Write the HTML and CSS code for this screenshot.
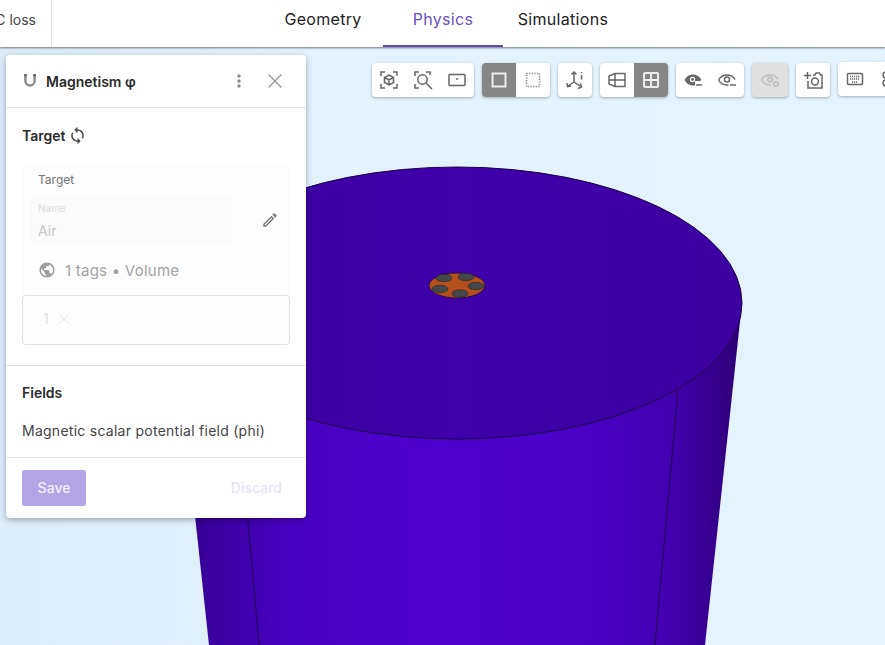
FILE: index.html
```html
<!DOCTYPE html>
<html lang="en">
<head>
<meta charset="utf-8">
<title>Magnetism</title>
<link rel="stylesheet" href="styles.css">
</head>
<body>
<header class="topbar">
  <div class="project"><span class="project-name">AC loss</span></div>
  <nav class="tabs">
    <a class="tab">Geometry</a>
    <a class="tab active">Physics</a>
    <a class="tab">Simulations</a>
  </nav>
</header>
<main class="stage">
  <svg class="model" viewBox="0 0 885 598" width="885" height="598" aria-hidden="true">
    <defs>
      <linearGradient id="side" x1="0" x2="1" y1="0" y2="0">
        <stop offset="0" stop-color="#2c0078"/>
        <stop offset=".06" stop-color="#3a009c"/>
        <stop offset=".2" stop-color="#4800bf"/>
        <stop offset=".45" stop-color="#5000cf"/>
        <stop offset=".7" stop-color="#4c00c6"/>
        <stop offset=".87" stop-color="#4400b0"/>
        <stop offset=".95" stop-color="#37008f"/>
        <stop offset="1" stop-color="#2c0074"/>
      </linearGradient>
      <linearGradient id="top" x1="0" x2="1" y1="0" y2="0">
        <stop offset="0" stop-color="#3c009e"/>
        <stop offset=".5" stop-color="#4000aa"/>
        <stop offset="1" stop-color="#3d00a0"/>
      </linearGradient>
    </defs>
    <path d="M172 256 L209 598 H705 L742 256Z" fill="url(#side)"/>
    <path d="M237 350 L259 598M678 343 L655 598" stroke="#1f0050" stroke-width="1" fill="none"/>
    <ellipse cx="457" cy="256" rx="285" ry="136" fill="url(#top)" stroke="#1a0248" stroke-width="1"/>
    <ellipse cx="457" cy="238.500" rx="28" ry="12.500" fill="#b4501e" stroke="#2a1040" stroke-width="1"/>
    <ellipse cx="444" cy="231" rx="8" ry="3.700" fill="#45474a" stroke="#222" stroke-width=".6"/>
    <ellipse cx="466" cy="230" rx="8" ry="3.700" fill="#45474a" stroke="#222" stroke-width=".6"/>
    <ellipse cx="476" cy="239" rx="8" ry="3.700" fill="#45474a" stroke="#222" stroke-width=".6"/>
    <ellipse cx="460" cy="246.500" rx="8" ry="3.700" fill="#45474a" stroke="#222" stroke-width=".6"/>
    <ellipse cx="440" cy="242" rx="8" ry="3.700" fill="#45474a" stroke="#222" stroke-width=".6"/>
  </svg>

  <div class="toolbar">
    <div class="group">
      <button class="tool"><svg viewBox="0 0 24 24" class="ico"><path d="M4 8V4h4M16 4h4v4M20 16v4h-4M8 20H4v-4"/><path d="M12 7l4.500 2.500v5L12 17l-4.500-2.500v-5zM7.500 9.500L12 12l4.500-2.500M12 12v5"/></svg></button>
      <button class="tool"><svg viewBox="0 0 24 24" class="ico"><path d="M4 8V4h4M15 4h4v3M4 16v4h4"/><circle cx="11.500" cy="11.500" r="4.700"/><path d="M15 15l6 6"/></svg></button>
      <button class="tool"><svg viewBox="0 0 24 24" class="ico"><rect x="4" y="6.500" width="16" height="11" rx="1"/><circle cx="12" cy="11" r="1" class="dot"/></svg></button>
    </div>
    <div class="group">
      <button class="tool on"><svg viewBox="0 0 24 24" class="ico"><rect x="5.500" y="5.500" width="13" height="13"/></svg></button>
      <button class="tool"><svg viewBox="0 0 24 24" class="ico thin"><rect x="5.500" y="5.500" width="13" height="13" stroke-dasharray="1.300 1.300"/></svg></button>
    </div>
    <div class="group">
      <button class="tool"><svg viewBox="0 0 24 24" class="ico"><path d="M11 5v9M11 14l-6 4M11 14l6 4M8.500 6.500L11 4l2.500 2.500M4 15l.6 3.600 3.400-.6M15 20.500l3.500-1.500-1-3.500"/><path d="M18.500 4v1.200M18.500 7v4.500"/></svg></button>
    </div>
    <div class="group">
      <button class="tool"><svg viewBox="0 0 24 24" class="ico"><path d="M4 8l6-2.500h10v13H10L4 16zM10 5.500v13M4 12h16"/></svg></button>
      <button class="tool on"><svg viewBox="0 0 24 24" class="ico"><rect x="5" y="5" width="14" height="14" rx="1"/><path d="M12 5v14M5 12h14"/></svg></button>
    </div>
    <div class="group">
      <button class="tool"><svg viewBox="0 0 24 24" class="ico"><path class="fill" d="M3.500 12C5.500 8.300 8.500 6.500 12 6.500c3.300 0 6.300 1.700 8.300 5l-1 1.500H14v4.400c-3.900.4-8.300-1.200-10.500-5.400z"/><circle class="hole" cx="11.500" cy="11.500" r="2.700"/><circle class="fill" cx="11.500" cy="11.500" r="1.400"/><path d="M15 17h6"/></svg></button>
      <button class="tool"><svg viewBox="0 0 24 24" class="ico"><path d="M3.500 12C5.500 8.500 8.500 7 12 7s6.500 1.600 8 4.500M13.500 16.900c-4 .5-8-1.400-10-4.900"/><circle cx="12" cy="11.500" r="2.500"/><path d="M15 17h6"/></svg></button>
    </div>
    <div class="group disabled">
      <button class="tool"><svg viewBox="0 0 24 24" class="ico"><path d="M3.500 12C5.500 8.500 8.500 7 12 7s6.500 1.600 8 4.500M13 16.900c-4 .5-7.500-1.400-9.500-4.900"/><circle cx="12" cy="11.500" r="2.300"/><circle cx="18" cy="16" r="2.300"/></svg></button>
    </div>
    <div class="group">
      <button class="tool"><svg viewBox="0 0 24 24" class="ico"><path d="M6.500 4v7M3 7.500h7M12 7h2l1-2h3.500l1 2h1.500v13H7v-7"/><circle cx="14" cy="13.500" r="3.400"/></svg></button>
    </div>
    <div class="group raised">
      <button class="tool"><svg viewBox="0 0 24 24" class="ico"><rect x="4.500" y="6.500" width="15" height="11" rx="1"/><path class="keys" d="M7 9.500h10M7 12h10M9 15h6"/></svg></button>
      <button class="tool"><svg viewBox="0 0 24 24" class="ico"><circle cx="9" cy="8" r="3"/><circle cx="9" cy="16" r="3"/></svg></button>
    </div>
  </div>

  <aside class="panel">
    <div class="panel-head">
      <svg viewBox="0 0 24 24" class="head-ico"><path d="M6.500 4v8a5.500 5.500 0 0 0 11 0V4"/><path class="cap" d="M6.500 3.500v3M17.500 3.500v3"/></svg>
      <h2 class="panel-title">Magnetism φ</h2>
      <svg viewBox="0 0 24 24" class="more"><path d="M12 8c1.100 0 2-.9 2-2s-.9-2-2-2-2 .9-2 2 .9 2 2 2zm0 2c-1.100 0-2 .9-2 2s.9 2 2 2 2-.9 2-2-.9-2-2-2zm0 6c-1.100 0-2 .9-2 2s.9 2 2 2 2-.9 2-2-.9-2-2-2z"/></svg>
      <svg viewBox="0 0 24 24" class="close"><path d="M5 5l14 14M19 5L5 19"/></svg>
    </div>
    <section class="target">
      <div class="section-title">
        <h3>Target</h3>
        <svg viewBox="0 0 24 24" class="sync"><path d="M12 4V1L8 5l4 4V6c3.310 0 6 2.690 6 6 0 1.010-.25 1.970-.7 2.800l1.460 1.460C19.540 15.030 20 13.570 20 12c0-4.420-3.580-8-8-8zm0 14c-3.310 0-6-2.690-6-6 0-1.010.25-1.970.7-2.800L5.240 7.740C4.460 8.970 4 10.430 4 12c0 4.420 3.580 8 8 8v3l4-4-4-4v3z"/></svg>
      </div>
      <div class="card">
        <div class="card-label">Target</div>
        <div class="name-row">
          <div class="name-field">
            <span class="field-label">Name</span>
            <span class="field-value">Air</span>
          </div>
          <svg viewBox="0 0 24 24" class="edit"><path d="M3 17.250V21h3.750L17.810 9.940l-3.750-3.750L3 17.250zM5.920 19H5v-.92l9.060-9.060.92.92L5.920 19zM20.710 5.630l-2.340-2.340c-.2-.2-.45-.29-.71-.29s-.51.1-.7.290l-1.830 1.830 3.750 3.750 1.830-1.830c.39-.39.39-1.020 0-1.410z"/></svg>
        </div>
        <div class="tags-row">
          <svg viewBox="0 0 24 24" class="globe"><path d="M12 2C6.480 2 2 6.480 2 12s4.480 10 10 10 10-4.480 10-10S17.520 2 12 2zm-1 17.930c-3.950-.49-7-3.850-7-7.930 0-.62.08-1.210.21-1.790L9 15v1c0 1.100.9 2 2 2v1.930zm6.900-2.540c-.26-.81-1-1.390-1.900-1.390h-1v-3c0-.55-.45-1-1-1H8v-2h2c.55 0 1-.45 1-1V7h2c1.100 0 2-.9 2-2v-.41c2.930 1.190 5 4.060 5 7.410 0 2.080-.8 3.970-2.100 5.390z"/></svg>
          <span>1 tags • Volume</span>
        </div>
      </div>
      <div class="tag-box">
        <span class="chip">1 <svg viewBox="0 0 24 24" class="chip-x"><path d="M5 5l14 14M19 5L5 19"/></svg></span>
      </div>
    </section>
    <section class="fields">
      <h3>Fields</h3>
      <p>Magnetic scalar potential field (phi)</p>
    </section>
    <div class="actions">
      <button class="save">Save</button>
      <button class="discard">Discard</button>
    </div>
  </aside>
</main>
</body>
</html>
```
FILE: styles.css
```css
* { box-sizing: border-box; }
html, body { margin: 0; height: 100%; overflow: hidden; }
body {
  width: 885px;
  height: 645px;
  display: flex;
  flex-direction: column;
  font-family: Inter, "Liberation Sans", sans-serif;
  color: #222;
  background: #e3f2fd;
}
.topbar {
  flex: none;
  height: 47px;
  display: flex;
  background: #fff;
  box-shadow: 0 1px 2px rgba(0,0,0,.5);
  position: relative;
  z-index: 3;
}
.project {
  flex: none;
  width: 52px;
  border-right: 1px solid #e0e0e0;
  overflow: hidden;
  display: flex;
  justify-content: flex-end;
  align-items: center;
  padding: 0 15px 9px 0;
  font-size: 14px;
  color: #444;
  white-space: nowrap;
}
.tabs {
  display: flex;
  margin-left: 211px;
  height: 47px;
}
.tab {
  width: 120px;
  display: flex;
  align-items: center;
  justify-content: center;
  padding-bottom: 10px;
  font-size: 16px;
  font-weight: 400;
  letter-spacing: .3px;
  color: #222;
}
.tab.active {
  color: #6a4fc0;
  border-bottom: 2px solid #5f49b8;
  padding-bottom: 8px;
}
.stage {
  flex: 1;
  position: relative;
  overflow: hidden;
  background: linear-gradient(90deg, #dcecf8 0, #e3f2fd 40%, #e4f3fe 100%);
}
.model { position: absolute; left: 0; top: 0; display: block; }

.toolbar {
  position: absolute;
  left: 372px;
  top: 16px;
  display: flex;
  gap: 8px;
  align-items: flex-start;
}
.group {
  display: flex;
  flex: none;
  height: 34px;
  border-radius: 4px;
  background: #fff;
  overflow: hidden;
  box-shadow: 0 1px 3px rgba(0,0,0,.3);
}
.group.raised { margin-top: -1px; }
.group.disabled { background: #e0e0e0; }
.group.disabled .tool { width: 36px; }
.group.disabled .ico { stroke: #bdbdbd; }
.tool {
  width: 34px;
  height: 34px;
  border: 0;
  padding: 0;
  background: none;
  display: flex;
  align-items: center;
  justify-content: center;
}
.tool.on { background: #868686; }
.ico {
  width: 24px;
  height: 24px;
  flex: none;
  fill: none;
  stroke: #666;
  stroke-width: 1.500;
}
.ico.thin { stroke: #888; stroke-width: 1.500; }
.ico .dot { fill: #666; stroke: none; }
.ico .fill { fill: #666; stroke: none; }
.ico .hole { fill: #fff; stroke: none; }
.ico .keys { stroke-dasharray: 1.200 .8; stroke-width: 1.300; }
.tool.on .ico { stroke: #ececec; stroke-width: 2; }

.panel {
  position: absolute;
  left: 6px;
  top: 8px;
  width: 300px;
  height: 463px;
  background: #fff;
  border-radius: 4px;
  box-shadow: 0 2px 6px rgba(0,0,0,.3);
  display: flex;
  flex-direction: column;
  z-index: 2;
}
.panel-head {
  flex: none;
  height: 53px;
  display: flex;
  align-items: center;
  padding: 4px 20px 4px 14px;
  border-bottom: 1px solid #e4e4e4;
}
.head-ico {
  width: 20px;
  height: 20px;
  fill: none;
  stroke: #8f8f8f;
  stroke-width: 3;
  margin-right: 6px;
}
.head-ico .cap { stroke: #666; }
.panel-title {
  flex: 1;
  margin: 0;
  font-size: 14px;
  font-weight: 600;
  color: #2a2a2a;
}
.more { width: 20px; height: 20px; fill: #8c8c8c; margin-right: 15px; }
.close { width: 22px; height: 22px; fill: none; stroke: #9a9a9a; stroke-width: 1.500; }

.target {
  flex: none;
  height: 258px;
  padding: 0 16px;
  border-bottom: 1px solid #e4e4e4;
}
.section-title {
  display: flex;
  align-items: center;
  gap: 3px;
  height: 54px;
}
h3 {
  margin: 0;
  font-size: 14px;
  font-weight: 600;
  color: #2a2a2a;
}
.sync { width: 19px; height: 19px; fill: #4a4a4a; }
.card {
  height: 130px;
  margin-top: 4px;
  background: #fdfdfd;
  padding: 6px 8px 0;
}
.card-label {
  font-size: 12px;
  line-height: 16px;
  color: #757575;
  padding-left: 8px;
}
.name-row {
  display: flex;
  align-items: center;
  margin-top: 8px;
}
.name-field {
  width: 202px;
  height: 48px;
  background: #fbfbfb;
  padding: 0 8px;
  display: flex;
  flex-direction: column;
}
.field-label { font-size: 10px; line-height: 14px; margin-top: 5px; color: #dcdcdc; }
.field-value { font-size: 14px; line-height: 20px; margin-top: 6px; color: #c6c6c6; }
.edit { width: 18px; height: 18px; fill: #7d7d7d; margin-left: 29px; margin-top: -1px; }
.tags-row {
  display: flex;
  align-items: center;
  gap: 9px;
  margin-top: 5px;
  padding-left: 8px;
  height: 42px;
  font-size: 15px;
  color: #a3a3a3;
  letter-spacing: .24px;
}
.globe { width: 18px; height: 18px; fill: #9e9e9e; }
.tag-box {
  height: 50px;
  margin-top: -1px;
  border: 1px solid #e2e2e2;
  border-radius: 4px;
  background: #fdfdfd;
  padding: 15px 20px;
}
.chip {
  display: flex;
  align-items: center;
  gap: 7px;
  font-size: 14px;
  line-height: 16px;
  color: #e4e4e4;
}
.chip-x { width: 16px; height: 16px; fill: none; stroke: #e4e4e4; stroke-width: 1.500; }

.fields {
  flex: none;
  height: 92px;
  padding: 18px 16px 0;
  border-bottom: 1px solid #e4e4e4;
}
.fields p {
  margin: 21px 0 0;
  font-size: 14px;
  line-height: 17px;
  color: #444;
  letter-spacing: .26px;
}
.actions {
  flex: 1;
  display: flex;
  justify-content: space-between;
  align-items: flex-start;
  padding: 12px 24px 0 16px;
}
button { font-family: inherit; }
.save {
  width: 64px;
  height: 36px;
  border: 0;
  border-radius: 3px;
  background: #b2a4e5;
  color: #f3f0fb;
  font-size: 14px;
  font-weight: 500;
  padding: 0 0 2px;
}
.discard {
  border: 0;
  background: none;
  padding: 0 0 2px;
  height: 36px;
  color: #e6e3f5;
  font-size: 14px;
  font-weight: 500;
}
```
